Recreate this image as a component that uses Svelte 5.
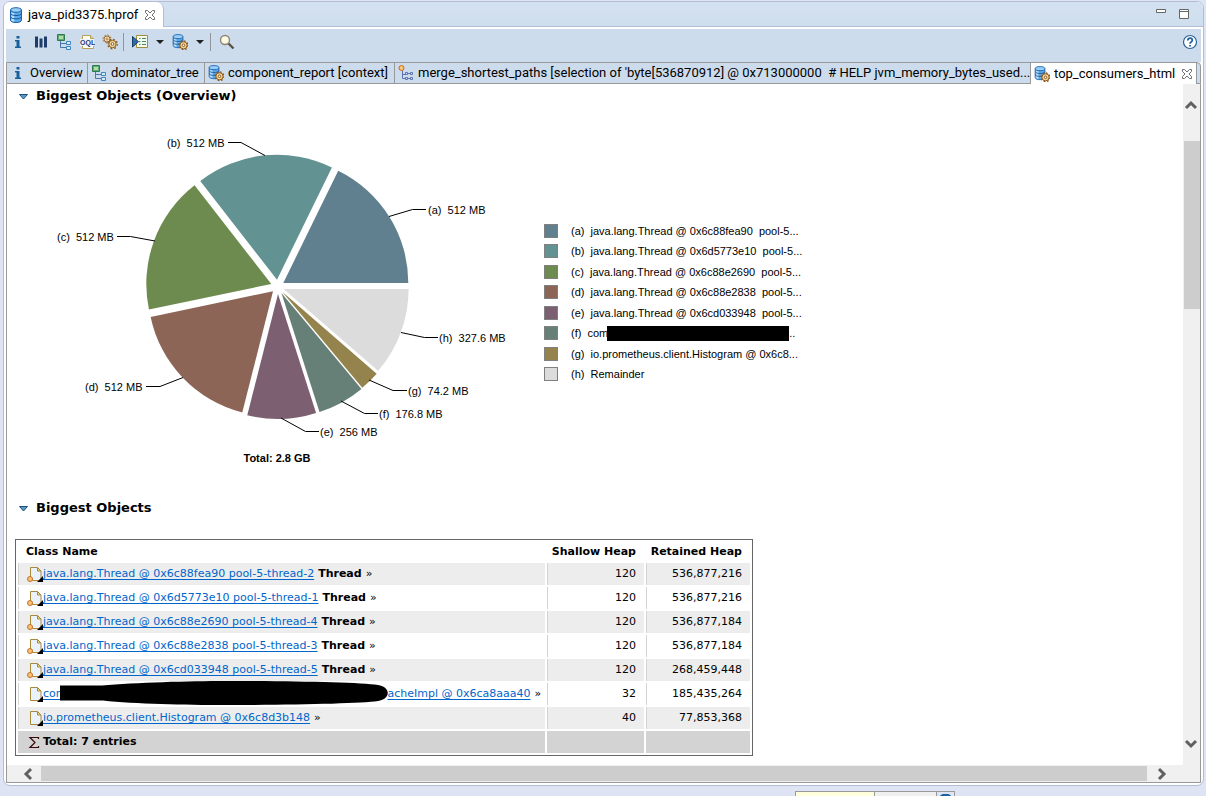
<script>
  const total = 2882.6;
  const RADIUS = 125;
  const slices = [
    { key: 'a', size: 512, label: '512 MB', color: '#60808f', apex: [283.3, 283], line: '389,216.5 412.5,209.5 426,209.5', at: [428, 214], name: 'java.lang.Thread @ 0x6c88fea90  pool-5...' },
    { key: 'b', size: 512, label: '512 MB', color: '#629291', apex: [277, 279.7], line: '265,155.5 241,142.5 228,142.5', at: [167, 147], name: 'java.lang.Thread @ 0x6d5773e10  pool-5...' },
    { key: 'c', size: 512, label: '512 MB', color: '#6e8b4f', apex: [271.3, 284], line: '155,241 130.5,236.5 117,236.5', at: [57, 241], name: 'java.lang.Thread @ 0x6c88e2690  pool-5...' },
    { key: 'd', size: 512, label: '512 MB', color: '#8c6556', apex: [273, 291.3], line: '183,377.5 160,386.5 146,386.5', at: [85, 391], name: 'java.lang.Thread @ 0x6c88e2838  pool-5...' },
    { key: 'e', size: 256, label: '256 MB', color: '#7c6071', apex: [278, 294], line: '281,418 305.5,431.5 319,431.5', at: [320, 436], name: 'java.lang.Thread @ 0x6cd033948  pool-5...' },
    { key: 'f', size: 176.8, label: '176.8 MB', color: '#668077', apex: [281.4, 293], line: '341,401 364.5,413.5 378,413.5', at: [379, 418], name: null },
    { key: 'g', size: 74.2, label: '74.2 MB', color: '#94834c', apex: [282.2, 291.8], line: '369,380 393,390.5 407,390.5', at: [408, 395], name: 'io.prometheus.client.Histogram @ 0x6c8...' },
    { key: 'h', size: 327.6, label: '327.6 MB', color: '#dcdcdc', apex: [283.6, 289], line: '401,332.5 424.5,337.5 438,337.5', at: [439, 342], name: 'Remainder' }
  ];

  let turned = 0;
  for (const s of slices) {
    const start = (turned / total) * Math.PI * 2;
    turned += s.size;
    const end = (turned / total) * Math.PI * 2;
    const [x, y] = s.apex;
    const point = (t) => `${x + RADIUS * Math.cos(t)} ${y - RADIUS * Math.sin(t)}`;
    s.path = `M${x} ${y}L${point(start)}A${RADIUS} ${RADIUS} 0 0 0 ${point(end)}Z`;
  }

  const rows = [
    { link: 'java.lang.Thread @ 0x6c88fea90 pool-5-thread-2', thread: true, shallow: '120', retained: '536,877,216' },
    { link: 'java.lang.Thread @ 0x6d5773e10 pool-5-thread-1', thread: true, shallow: '120', retained: '536,877,216' },
    { link: 'java.lang.Thread @ 0x6c88e2690 pool-5-thread-4', thread: true, shallow: '120', retained: '536,877,184' },
    { link: 'java.lang.Thread @ 0x6c88e2838 pool-5-thread-3', thread: true, shallow: '120', retained: '536,877,184' },
    { link: 'java.lang.Thread @ 0x6cd033948 pool-5-thread-5', thread: true, shallow: '120', retained: '268,459,448' },
    { masked: true, shallow: '32', retained: '185,435,264' },
    { link: 'io.prometheus.client.Histogram @ 0x6c8d3b148', shallow: '40', retained: '77,853,368' }
  ];
</script>

{#snippet cylinder()}
  <path d="M2.500 3v10c0 3.400 11 3.400 11 0V3z" fill="#5ba8e6" stroke="#1c62b0" />
  <path d="M4 5.500v8.500M5.500 6v8.500" stroke="#b9def8" stroke-width="1.500" />
  <ellipse cx="8" cy="3" rx="5.500" ry="2.300" fill="#9bd0f6" stroke="#1c62b0" />
  <path d="M2.500 6.300c0 3 11 3 11 0M2.500 9.600c0 3 11 3 11 0" fill="none" stroke="#1c5aa6" />
{/snippet}

{#snippet gear()}
  <circle cx="11.500" cy="11.300" r="3.600" fill="#f4d79b" stroke="#8d5a1b" />
  <circle cx="11.500" cy="11.300" r="4.400" fill="none" stroke="#8d5a1b" stroke-width="1.200" stroke-dasharray="1.700 1.750" />
  <circle cx="11.500" cy="11.300" r="1.300" fill="#fff" stroke="#8d5a1b" />
{/snippet}

{#snippet icon(name)}
  <svg class="icon" viewBox="0 0 16 16" aria-hidden="true">
    {#if name === 'db'}
      {@render cylinder()}
    {:else if name === 'dbgear'}
      <g transform="translate(-1 0) scale(.88)">{@render cylinder()}</g>
      {@render gear()}
    {:else if name === 'info'}
      <path d="M6.500 2h3v2.500h-3zM5 6h4.500v6.500H11V14H5v-1.500h1.500v-5H5z" fill="#17609c" />
    {:else if name === 'bars'}
      <path d="M2 2.500h3v11H2zM6.500 4.500h3v9h-3zM11 2.500h3v11h-3z" fill="#1f3d6b" />
    {:else if name === 'tree'}
      <path d="M4.500 6v7.500H10M4.500 9.500H10" fill="none" stroke="#4a78a8" />
      <path d="M1.500.5h7v6h-7z" fill="#5fae74" stroke="#2d7a4c" />
      <path d="M3 2h4v3H3z" fill="#b4dcab" />
      <path d="M10.500 7.500h4v3h-4zM10.500 12.500h4v3h-4z" fill="#d7ecfa" stroke="#3f86bd" />
    {:else if name === 'paths'}
      <path d="M4.500 5.500v8H8M4.500 9.500H8M8 8.500h6.500M8 13.500h6.500" fill="none" stroke="#5b74ae" />
      <path d="M7.500 7.500h2v2h-2zM12.500 7.500h2v2h-2zM7.500 12.500h2v2h-2zM12.500 12.500h2v2h-2z" fill="#dfe8f6" stroke="#5b74ae" />
      <circle cx="3.500" cy="3" r="2.500" fill="#fbc57e" stroke="#cd6a13" />
    {:else if name === 'oql'}
      <path d="M3.500 1.500h8l3 3v10h-11z" fill="#fffdf0" stroke="#b9a15c" />
      <path d="M11.500 1.500v3h3" fill="#e7cf87" stroke="#b9a15c" />
      <path d="M1 5h14v7H1z" fill="#eef3fa" />
      <text x="1" y="11" class="oql">OQL</text>
    {:else if name === 'gears'}
      <circle cx="5" cy="5" r="3" fill="#f3dfb4" stroke="#9c6b2c" />
      <circle cx="5" cy="5" r="4" fill="none" stroke="#9c6b2c" stroke-dasharray="1.500 1.640" />
      <circle cx="5" cy="5" r="1" fill="#fff" stroke="#9c6b2c" stroke-width=".8" />
      <circle cx="10.500" cy="10" r="3.700" fill="#f4d79b" stroke="#8d5a1b" />
      <circle cx="10.500" cy="10" r="4.800" fill="none" stroke="#8d5a1b" stroke-width="1.200" stroke-dasharray="1.800 1.970" />
      <circle cx="10.500" cy="10" r="1.400" fill="#fff" stroke="#8d5a1b" />
    {:else if name === 'report'}
      <path d="M4.500 1.500h11v12h-11z" fill="#f7fbef" stroke="#a08d3c" />
      <path d="M7 4.500h1.500M10 4.500h4M7 7.500h1.500M10 7.500h4M7 10.500h1.500M10 10.500h4" stroke="#3e8e5a" stroke-width="1.200" />
      <path d="M.5 2.500v10.500L6.500 7.700z" fill="#2f6ca5" stroke="#173f70" />
    {:else if name === 'search'}
      <path d="M9.500 9.500l5 5" stroke="#5d5348" stroke-width="2.400" />
      <circle cx="6" cy="6" r="4.500" fill="#fdfae2" stroke="#8a8578" stroke-width="1.400" />
    {:else if name === 'help'}
      <circle cx="8" cy="8" r="6.500" fill="#fff" stroke="#2c6293" stroke-width="1.200" />
      <path d="M5.800 6.500c0-3.200 4.500-2.800 4.500-.3C10.300 8 8 7.800 8 9.700M8 11v1.600" fill="none" stroke="#1d62a0" stroke-width="1.800" />
    {:else if name === 'close'}
      <path d="M3.500 3.500h2L8 6l2.500-2.500h2v2L10 8l2.500 2.500v2h-2L8 10l-2.500 2.500h-2v-2L6 8 3.500 5.500z" fill="#fff" stroke="#6f6f6f" />
    {/if}
  </svg>
{/snippet}

{#snippet chevron(d)}
  <svg class="chevron" viewBox="0 0 16 16" aria-hidden="true"><path {d} fill="none" stroke="#606060" stroke-width="3" /></svg>
{/snippet}

{#snippet fileIcon(thread)}
  <svg class="file" viewBox="0 0 17 16" aria-hidden="true">
    <path d="M4.500 1.500h7l3.500 3.500v9.500h-10.500z" fill="#eaf2fc" stroke="#a88a3a" />
    <path d="M11.500 1.500v3.500h3.500z" fill="#f2d98c" stroke="#a88a3a" />
    <path d="M17 10v6h-6z" fill="#000" />
    {#if thread}<circle cx="4" cy="13" r="2.500" fill="#fbc27c" stroke="#c9701d" />{/if}
  </svg>
{/snippet}

<div class="workbench">
  <main class="part">
    <header class="titlebar">
      <div class="file-tab">
        {@render icon('db')}
        <span>java_pid3375.hprof</span>
        <button class="plain" aria-label="Close editor">{@render icon('close')}</button>
      </div>
      <div class="window-buttons">
        <button class="plain" aria-label="Minimize"><svg viewBox="0 0 12 12" width="12" height="12"><path d="M1.500 1.500h9v3h-9z" fill="#fff" stroke="#666" /></svg></button>
        <button class="plain" aria-label="Maximize"><svg viewBox="0 0 12 12" width="12" height="12"><path d="M1.500 1.500h9v9h-9zM1.500 3.500h9" fill="#fff" stroke="#666" /></svg></button>
      </div>
    </header>

    <div class="editor">
      <div class="toolbar" role="toolbar" aria-label="Heap dump actions">
        <button class="tool" aria-label="Overview">{@render icon('info')}</button>
        <button class="tool" aria-label="Histogram">{@render icon('bars')}</button>
        <button class="tool" aria-label="Dominator tree">{@render icon('tree')}</button>
        <button class="tool" aria-label="Query editor">{@render icon('oql')}</button>
        <button class="tool" aria-label="Thread overview">{@render icon('gears')}</button>
        <i class="rule"></i>
        <button class="tool" aria-label="Run report">{@render icon('report')}</button>
        <button class="drop" aria-label="Report list"><i></i></button>
        <button class="tool" aria-label="Query browser">{@render icon('dbgear')}</button>
        <button class="drop" aria-label="Query list"><i></i></button>
        <i class="rule"></i>
        <button class="tool" aria-label="Search">{@render icon('search')}</button>
        <button class="tool help" aria-label="Help">{@render icon('help')}</button>
      </div>

      <div class="tabs" role="tablist">
        <button class="tab w1" role="tab" aria-selected="false">{@render icon('info')}<span>Overview</span></button>
        <button class="tab w2" role="tab" aria-selected="false">{@render icon('tree')}<span>dominator_tree</span></button>
        <button class="tab w3" role="tab" aria-selected="false">{@render icon('dbgear')}<span>component_report [context]</span></button>
        <button class="tab grow" role="tab" aria-selected="false">{@render icon('paths')}<span>{"merge_shortest_paths [selection of 'byte[536870912] @ 0x713000000  # HELP jvm_memory_bytes_used..."}</span></button>
        <button class="tab active" role="tab" aria-selected="true">{@render icon('dbgear')}<span>top_consumers_html</span>{@render icon('close')}</button>
      </div>

      <div class="view">
        <div class="page">
          <h2><svg viewBox="0 0 9 6" aria-hidden="true"><path d="M.5.500h8l-4 4.500z" fill="#5c9bc0" stroke="#1c4f80" /></svg>Biggest Objects (Overview)</h2>

          <section class="overview">
            <svg class="pie" viewBox="15 124 510 350" role="img" aria-label="Biggest objects by retained size">
              {#each slices as s}
                <path d={s.path} fill={s.color} />
                <polyline points={s.line} fill="none" stroke="#000" />
                <text x={s.at[0]} y={s.at[1]}>({s.key})&nbsp; {s.label}</text>
              {/each}
              <text class="sum" x="277" y="462" text-anchor="middle">Total: 2.8 GB</text>
            </svg>
            <ul class="legend">
              {#each slices as s}
                <li>
                  <i style:background={s.color}></i>
                  {#if s.name}
                    <span>({s.key})&nbsp; {s.name}</span>
                  {:else}
                    <span>({s.key})&nbsp; com</span><b></b><span>..</span>
                  {/if}
                </li>
              {/each}
            </ul>
          </section>

          <h2><svg viewBox="0 0 9 6" aria-hidden="true"><path d="M.5.500h8l-4 4.500z" fill="#5c9bc0" stroke="#1c4f80" /></svg>Biggest Objects</h2>

          <table>
            <thead>
              <tr><th>Class Name</th><th class="num c2">Shallow Heap</th><th class="num c3">Retained Heap</th></tr>
            </thead>
            <tbody>
              {#each rows as r}
                <tr>
                  <td>
                    <div class="entry">
                      {@render fileIcon(r.thread)}
                      {#if r.masked}
                        <a href="#object">com<svg class="mask" viewBox="0 0 328 24" aria-hidden="true"><path d="M0 4.500h42C75 1.500 130 0 165 0c70 0 135 1.500 153 4 13 2 13 14 0 16-18 2.500-83 4-153 4-40 0-90-1-122-4.500H0z" /></svg>acheImpl @ 0x6ca8aaa40</a>
                      {:else}
                        <a href="#object">{r.link}</a>
                      {/if}
                      {#if r.thread}<strong>Thread</strong>{/if}
                      <span class="more">»</span>
                    </div>
                  </td>
                  <td class="num">{r.shallow}</td>
                  <td class="num">{r.retained}</td>
                </tr>
              {/each}
            </tbody>
            <tfoot>
              <tr>
                <td>
                  <div class="entry">
                    <svg class="file" viewBox="0 0 17 16" aria-hidden="true"><path d="M12.500 5V3.500h-8.500l5 5-5 5h8.500V12" fill="none" stroke="#3a0808" stroke-width="1.200" /></svg>
                    <strong class="total">Total: 7 entries</strong>
                  </div>
                </td>
                <td></td>
                <td></td>
              </tr>
            </tfoot>
          </table>
        </div>
        <div class="vbar">
          {@render chevron('M3 11l5-5 5 5')}
          <i></i>
          {@render chevron('M3 5l5 5 5-5')}
        </div>
        <div class="hbar">
          {@render chevron('M11 3L6 8l5 5')}
          <i></i>
          {@render chevron('M5 3l5 5-5 5')}
        </div>
      </div>
    </div>
  </main>

  <footer>
    <div class="status"><i class="heap"></i><i class="free"></i><i class="trash"></i></div>
  </footer>
</div>

<style>
  :global(body) {
    background: #dfe4f5;
  }
  .workbench {
    box-sizing: border-box;
    display: flex;
    flex-direction: column;
    min-height: 100vh;
    padding: 1px 2px 0 3px;
    font: 13px/18px Roboto, "Noto Sans", sans-serif;
    color: #000;
  }
  button {
    font: inherit;
    color: inherit;
    border: 0;
    margin: 0;
    padding: 0;
    background: none;
  }
  .plain,
  .tool,
  .drop {
    display: flex;
    align-items: center;
    justify-content: center;
  }
  svg {
    display: block;
    flex: none;
  }
  .icon {
    width: 16px;
    height: 16px;
  }
  .oql {
    font: bold 7px "Liberation Sans", sans-serif;
    fill: #1d3c78;
  }
  .part {
    flex: 1;
    display: flex;
    flex-direction: column;
    border: 1px solid #b3bdd4;
    border-radius: 7px;
    background: #fff;
    overflow: hidden;
  }
  .titlebar {
    display: flex;
    justify-content: space-between;
    height: 24px;
    border-bottom: 1px solid #b3bdd4;
    background: linear-gradient(#d3e1f0, #cfdeed);
  }
  .file-tab {
    display: flex;
    align-items: center;
    gap: 4px;
    height: 25px;
    padding: 0 5px 0 4px;
    border-right: 1px solid #b3bdd4;
    border-radius: 0 7px 0 0;
    background: #fff;
  }
  .window-buttons {
    display: flex;
    align-items: center;
    gap: 11px;
    padding-right: 13px;
  }
  .editor {
    flex: 1;
    display: flex;
    flex-direction: column;
    margin: 2px 2px 2px 2px;
  }
  .toolbar {
    display: flex;
    align-items: center;
    height: 26px;
    padding-bottom: 7px;
    background: #cddcec;
  }
  .tool {
    width: 23px;
    height: 24px;
  }
  .drop {
    width: 17px;
    height: 24px;
  }
  .drop i {
    border: 4px solid transparent;
    border-top-color: #222;
    border-bottom: 0;
  }
  .rule {
    width: 1px;
    height: 18px;
    margin: 0 4px 0 2px;
    background: #8f969e;
  }
  .help {
    margin-left: auto;
  }
  .tabs {
    display: flex;
    height: 20px;
    border: 1px solid #999;
    border-radius: 0 4px 0 0;
    background: #cddcec;
  }
  .tab {
    display: flex;
    align-items: center;
    gap: 4px;
    min-width: 0;
    box-sizing: border-box;
    padding: 0 3px;
    border-right: 1px solid #999;
    white-space: pre;
  }
  .w1 {
    width: 81px;
    flex: none;
  }
  .w2 {
    width: 117px;
    flex: none;
  }
  .w3 {
    width: 190px;
    flex: none;
  }
  .grow {
    flex: 1;
  }
  .active {
    flex: none;
    width: 166px;
    height: 21px;
    margin-right: 3px;
    background: #fff;
  }
  .active span {
    flex: 1;
    text-align: left;
  }
  .view {
    flex: 1;
    display: grid;
    grid-template-columns: minmax(0, 1fr) 17px;
    grid-template-rows: 1fr 17px;
    border: solid #999;
    border-width: 0 1px 1px;
  }
  .page {
    padding: 2px 8px 8px;
    background: #fff;
  }
  h2 {
    display: flex;
    align-items: center;
    gap: 8px;
    margin: 0;
    padding-left: 4px;
    font: bold 13px/20px Verdana, "DejaVu Sans", sans-serif;
  }
  h2 svg {
    width: 9px;
    height: 6px;
    margin-top: 2px;
  }
  .overview {
    display: flex;
    align-items: flex-start;
    padding: 18px 0 24px;
    font: 11px/14px Arial, "Liberation Sans", sans-serif;
  }
  .pie {
    width: 510px;
    height: 350px;
  }
  .pie text {
    white-space: pre;
  }
  .sum {
    font-weight: bold;
  }
  .legend {
    display: flex;
    flex-direction: column;
    justify-content: space-between;
    height: 157px;
    margin: 100px 0 0 19px;
    padding: 0;
    list-style: none;
  }
  .legend li {
    display: flex;
    align-items: center;
    height: 14px;
    white-space: pre;
  }
  .legend i {
    width: 12px;
    height: 12px;
    margin-right: 13px;
    border: 1px solid #808080;
  }
  .legend b {
    width: 182px;
    height: 15px;
    margin-left: -1px;
    background: #000;
    position: relative;
  }
  table {
    width: 738px;
    margin-top: 21px;
    border: 1px solid #666;
    border-spacing: 2px;
    table-layout: fixed;
    font: 11px/16px Verdana, "DejaVu Sans", sans-serif;
  }
  th {
    height: 19px;
    padding: 0 8px;
    text-align: left;
    white-space: nowrap;
  }
  th.c2 {
    width: 89px;
    padding-left: 0;
  }
  th.c3 {
    width: 96px;
    padding-left: 0;
  }
  td {
    height: 22px;
    padding: 0 8px 0 7px;
    border-left: 1px solid #d3d3d3;
  }
  th.num,
  td.num {
    text-align: right;
  }
  tbody tr:nth-child(odd) td {
    background: #ededed;
  }
  tfoot td {
    background: #d3d3d3;
  }
  .entry {
    display: flex;
    align-items: center;
    height: 20px;
    white-space: nowrap;
  }
  .file {
    width: 17px;
    height: 16px;
  }
  a {
    display: flex;
    color: #0066cc;
    text-decoration: underline;
    text-underline-offset: 2px;
  }
  strong {
    margin-left: 4px;
  }
  strong.total {
    margin-left: 0;
  }
  .more {
    margin-left: 4px;
  }
  .mask {
    position: relative;
    width: 328px;
    height: 24px;
    margin: -5px 0 -3px -7px;
  }
  .vbar,
  .hbar {
    display: flex;
    background: #f0f0f0;
  }
  .vbar {
    flex-direction: column;
    padding: 13px 0;
  }
  .vbar i {
    height: 168px;
    margin: 28px 0 auto 1px;
    background: #cdcdcd;
  }
  .hbar {
    grid-column: 1 / -1;
    align-items: center;
    padding: 0 30px 0 13px;
  }
  .hbar i {
    flex: 1;
    height: 15px;
    margin: 0 7px 0 5px;
    background: #cdcdcd;
  }
  .chevron {
    width: 16px;
    height: 16px;
  }
  footer {
    display: flex;
    justify-content: center;
    height: 10px;
    padding-left: 542px;
    overflow: hidden;
  }
  .status {
    display: flex;
    width: 158px;
    height: 5px;
    margin-top: 5px;
    border: 1px solid #999;
    border-bottom: 0;
  }
  .heap {
    width: 78px;
    background: #ffffdc;
  }
  .free {
    flex: 1;
    border: solid #999;
    border-width: 0 1px;
    background: #f0f0f0;
  }
  .trash {
    width: 17px;
    background: radial-gradient(ellipse at 50% 100%, #1d62a0 45%, #dfe4f5 50%);
  }
</style>
